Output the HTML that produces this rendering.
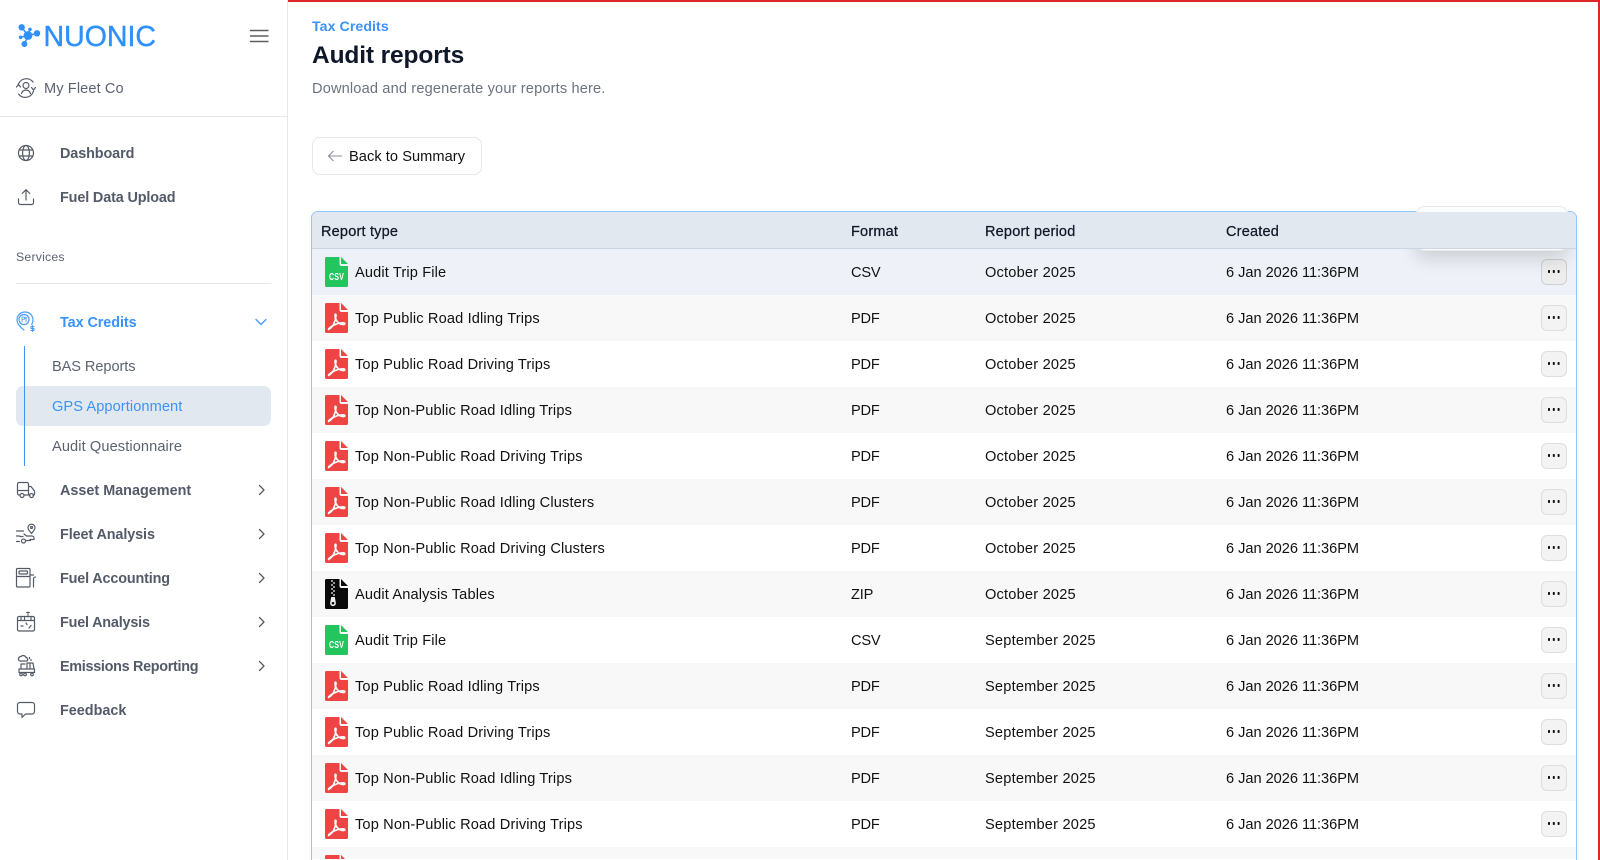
<!DOCTYPE html>
<html lang="en"><head><meta charset="utf-8"><title>Audit reports</title>
<style>
*{box-sizing:border-box}
html,body{margin:0;width:1600px;height:860px;overflow:hidden;background:#fff;font-family:"Liberation Sans",sans-serif}
#page{position:relative;width:1600px;height:860px;overflow:hidden;background:#fff}
.t{position:absolute;white-space:nowrap;line-height:20px;font-size:14.6px;letter-spacing:.2px}
.nav{left:60px;font-weight:700;color:#535a68;font-size:14.4px;letter-spacing:-.1px}
.sub{left:52px;color:#5b6270}
#side{position:absolute;left:0;top:0;width:288px;height:860px;border-right:1px solid #e5e7eb;background:#fff}
#red{position:absolute;left:288px;top:0;width:1312px;height:860px;border-top:2px solid #dc2626;border-right:2px solid #dc2626;z-index:9;pointer-events:none}
#tbl{position:absolute;left:311px;top:211px;width:1266px;height:649px;border:1.5px solid #93c5fd;border-bottom:0;border-radius:7px 7px 0 0;overflow:hidden;background:#fff}
#pop{position:absolute;left:1415px;top:206px;width:154px;height:45px;background:#fbfcfe;border:1px solid #e5e7eb;border-radius:10px;z-index:3;clip-path:inset(-2px -2px 39px -2px)}
#pop2{position:absolute;left:1102.5px;top:-6.5px;width:154px;height:45px;background:#fff;border:1px solid #e5e7eb;border-radius:10px;box-shadow:0 8px 18px rgba(0,0,0,.14);z-index:1}
.h{position:absolute;left:0;top:0;width:100%;height:37px;background:#e2e8f0;border-bottom:1px solid #cbd5e1;z-index:2}
.h span{position:absolute;top:10px;line-height:20px;font-size:14.5px;font-weight:400;letter-spacing:.2px;color:#111827;-webkit-text-stroke:.25px #111827}
.r{position:relative;height:46px;font-size:14.6px;letter-spacing:.2px;color:#111}
.r span{position:absolute;top:14px;line-height:20px;white-space:nowrap}
.a{left:43px;letter-spacing:.14px}.b{left:539px;letter-spacing:-.2px}.c{left:673px}.d{left:914px;letter-spacing:-.03px}
.r svg{position:absolute;left:12.5px;top:8px}
.r i{position:absolute;left:1228.5px;top:10px;width:26px;height:26px;border:1px solid #dedede;border-radius:6px;background:#f3f3f3}
.r i:before{content:"";position:absolute;left:6px;top:10.8px;width:2.4px;height:2.4px;background:#111;border-radius:30%;box-shadow:4.8px 0 #111,9.6px 0 #111}
.r:nth-child(odd){background:#fff}
.r:nth-child(even){background:#f8f8f8}
.r.last{height:12px;overflow:hidden}
#rows{position:absolute;left:0;top:36.5px;width:100%}
#rows .r.first{background:#eef2f8}
#rows .r.first i{background:#eeeded;border-color:#cfcfd2}
.csv{font-family:"Liberation Sans",sans-serif;font-weight:700;font-size:10.5px;fill:#fff}
</style></head><body><div id="page">
<svg width="0" height="0" style="position:absolute"><defs>
<symbol id="pdf" viewBox="0 0 23 30"><path d="M1.5 0H14.5V7a2 2 0 0 0 2 2H23V28.5a1.5 1.5 0 0 1-1.5 1.5H1.5A1.5 1.5 0 0 1 0 28.5V1.5A1.5 1.5 0 0 1 1.5 0Z" fill="#ef4444"/><path d="M16 0L23 7H16Z" fill="#ef4444"/><path d="M4 26C8 24.5 10.500 18 11 13C11.200 10.500 9.800 10.500 10 13C10.500 18 14.500 22 19 21.500C20.500 21.200 20 19.800 18 19.800C13 19.800 7 22.500 4 25.500C3.300 26.500 3.500 27 4 26Z" fill="none" stroke="#fff" stroke-width="1.600"/></symbol>
<symbol id="zip" viewBox="0 0 23 30"><path d="M1.5 0H14.5V7a2 2 0 0 0 2 2H23V28.5a1.5 1.5 0 0 1-1.5 1.5H1.5A1.5 1.5 0 0 1 0 28.5V1.5A1.5 1.5 0 0 1 1.5 0Z" fill="#0a0a0a"/><path d="M16 0L23 7H16Z" fill="#0a0a0a"/><path d="M6 2h2M8 4h2M6 6h2M8 8h2M6 10h2M8 12h2M6 14h2M8 16h2" stroke="#eee" stroke-width="1.2"/><path d="M6.2 18h3.6l1 5.5a2.9 2.9 0 1 1-5.6 0Z" fill="#eee"/><circle cx="8" cy="24.2" r="1.3" fill="#0a0a0a"/></symbol>
</defs></svg>

<div id="side">
<svg width="287" height="860" style="position:absolute;left:0;top:0" fill="none" stroke="#555b66" stroke-width="1.2" stroke-linecap="round" stroke-linejoin="round">
 <!-- logo -->
 <g fill="#2e90fa" stroke="none"><circle cx="21.700" cy="27.300" r="3.200"/><circle cx="37" cy="33.300" r="3.200"/><circle cx="28" cy="35.500" r="4.400"/><circle cx="24.400" cy="44" r="3"/><circle cx="20.600" cy="37.300" r="1.800"/><circle cx="30" cy="29.400" r="1.800"/></g>
 <path d="M21.700 27.300L28 35.500L37 33.300M28 35.500L24.400 44M28 35.500L20.600 37.300M28 35.500L30 29.400" stroke="#2e90fa" stroke-width="1.500"/>
 <text x="43.500" y="46" textLength="112.500" lengthAdjust="spacingAndGlyphs" font-family="Liberation Sans" font-size="29" fill="#2e90fa" stroke="#2e90fa" stroke-width=".4">NUONIC</text>
 <!-- hamburger -->
 <path d="M250.500 30.500H268M250.500 36H268M250.500 41.500H268" stroke="#5b5f66" stroke-width="1.400"/>
 <!-- org -->
 <path d="M18 85.500a8.500 8.500 0 0 1 15-3.500M33.500 91a8.500 8.500 0 0 1-15 3"/><path d="M16.500 87l2-2.500 2 2.500M35.500 87.500l-2 2.500-2-2.500"/><circle cx="26" cy="85.500" r="3"/><path d="M21.500 93.500c.8-2.300 2.500-3.500 4.500-3.500s3.700 1.200 4.500 3.500"/>
 <!-- globe -->
 <circle cx="26" cy="153" r="7.500"/><ellipse cx="26" cy="153" rx="3.400" ry="7.500"/><path d="M19.200 150h13.600M19.200 156h13.600"/>
 <!-- upload -->
 <path d="M26 190v10M22.200 193.500L26 189.700l3.800 3.800M18.500 199v3.500a2 2 0 0 0 2 2h11a2 2 0 0 0 2-2V199"/>
 <!-- tax -->
 <g stroke="#4b9bf9"><path d="M24 330c-4-3-7-6.500-7-10a8 8 0 0 1 16 0c0 1.500-.5 3-1.300 4.300"/><circle cx="24" cy="319.500" r="5"/><path d="M22 322v-5h1.500a1.200 1.200 0 0 1 0 2.500H22M25 317l1 2 1-2M26 319v3" stroke-width=".8"/><path d="M34 326.500h-3v2h3v2h-3M32.500 325.500v6" stroke-width="1"/></g>
 <path d="M256 319.500l5 5 5-5" stroke="#4b9bf9" stroke-width="1.400"/>
 <!-- asset truck -->
 <path d="M20 495h-1a1.500 1.500 0 0 1-1.500-1.500V484a1.500 1.500 0 0 1 1.500-1.500h8a1.500 1.500 0 0 1 1.500 1.500v11M17.500 490.500h11M24 495h6M28.500 486.500h2.500l3.500 4.500v3a1.500 1.500 0 0 1-1.500 1.500"/><circle cx="22" cy="495.500" r="2"/><circle cx="31.500" cy="495.500" r="2"/>
 <!-- fleet -->
 <path d="M16.500 531h7M16.500 536h3M16.500 541.500h3"/><path d="M24 534l2.500 2h5.500a2 2 0 0 1 2 2v1.500h-4M20 536.500h3"/><circle cx="23.500" cy="541" r="2"/><path d="M25.500 540.500h5"/><path d="M31.500 533.500c-2-2.500-3.500-4-3.500-5.800a3.500 3.500 0 0 1 7 0c0 1.800-1.500 3.300-3.500 5.800Z"/><circle cx="31.500" cy="527.500" r="1"/>
 <!-- fuel accounting -->
 <rect x="16.500" y="568.500" width="13.500" height="18.500" rx="1"/><rect x="19" y="571" width="8.500" height="3" rx="1"/><path d="M16.500 576.500h13.500M30 575l3.500 0M33.500 587v-8a2 2 0 0 1 2-2"/>
 <!-- fuel analysis -->
 <rect x="17.500" y="616.500" width="17" height="14.500" rx="1.500"/><path d="M17.500 620.500h17M21 616.500v4M24.500 616.500v4M31 616.500v4M21 626h2M26 623l1 1.500M29 628l2-2.500"/><path d="M28 617v-5M26.500 612.500h3" stroke-width="1"/>
 <!-- emissions -->
 <path d="M19 660.500a2.500 2.500 0 0 1 2-4 3 3 0 0 1 5 1 2 2 0 0 1 1 3.500h-7"/><path d="M29.500 657.500v1M31 659.500v1M19 669h15.500v3.500H19ZM21 669v-5h4M27 669v-6h6l1 6M30 663v6"/><circle cx="21" cy="674.500" r="1.300"/><circle cx="25" cy="674.500" r="1.300"/><circle cx="32" cy="674.500" r="1.300"/>
 <!-- feedback -->
 <path d="M20 702.500h12a2.500 2.500 0 0 1 2.500 2.500v6.500a2.500 2.500 0 0 1-2.500 2.500h-6.500l-3.500 3.500v-3.500h-2a2.500 2.500 0 0 1-2.500-2.500V705a2.500 2.500 0 0 1 2.500-2.500Z"/>
 <!-- chevrons -->
 <path d="M259.500 485.500l4.500 4.500-4.500 4.500M259.500 529.500l4.500 4.500-4.500 4.500M259.500 573.500l4.500 4.500-4.500 4.500M259.500 617.500l4.500 4.500-4.500 4.500M259.500 661.500l4.500 4.500-4.500 4.500" stroke-width="1.300"/>
 <!-- dividers -->
 <path d="M0 116.500H287M16 283.500H271" stroke="#e5e7eb" stroke-width="1"/>
</svg>
<div class="t" style="left:44px;top:79px;color:#5b6270;letter-spacing:.1px">My Fleet Co</div>
<div class="t nav" style="top:144px">Dashboard</div>
<div class="t nav" style="top:188px;letter-spacing:-.13px">Fuel Data Upload</div>
<div class="t" style="left:16px;top:247px;font-size:12.300px;color:#5b6270">Services</div>
<div class="t nav" style="top:313px;color:#3b92f8;letter-spacing:-.07px">Tax Credits</div>
<div class="t sub" style="top:357px;letter-spacing:-.08px">BAS Reports</div>
<div style="position:absolute;left:16px;top:386px;width:255px;height:40px;border-radius:7px;background:#e2e8f0"></div>
<div style="position:absolute;left:24px;top:346px;width:1px;height:120px;background:#3b92f8"></div>
<div class="t sub" style="top:397px;color:#3b92f8;letter-spacing:.08px">GPS Apportionment</div>
<div class="t sub" style="top:437px;letter-spacing:.1px">Audit Questionnaire</div>
<div class="t nav" style="top:481px;letter-spacing:0">Asset Management</div>
<div class="t nav" style="top:525px">Fleet Analysis</div>
<div class="t nav" style="top:569px;letter-spacing:-.15px">Fuel Accounting</div>
<div class="t nav" style="top:613px;letter-spacing:-.19px">Fuel Analysis</div>
<div class="t nav" style="top:657px;letter-spacing:-.3px">Emissions Reporting</div>
<div class="t nav" style="top:701px;letter-spacing:0">Feedback</div>
</div>

<div id="red"></div>
<div class="t" style="left:312px;top:17px;color:#3b92f8;font-weight:700;font-size:14.200px;letter-spacing:.05px">Tax Credits</div>
<div class="t" style="left:312px;top:41px;line-height:30px;font-size:24.500px;font-weight:700;color:#0f172a;letter-spacing:-.13px">Audit reports</div>
<div class="t" style="left:312px;top:79px;color:#6b7280;letter-spacing:.15px">Download and regenerate your reports here.</div>
<div style="position:absolute;left:312px;top:137px;width:170px;height:38px;border:1px solid #e5e7eb;border-radius:8px;background:#fff"></div>
<svg width="16" height="12" style="position:absolute;left:327px;top:150px" fill="none" stroke="#8a8f98" stroke-width="1.100"><path d="M15 6H1.500M6.500 1L1.500 6l5 5"/></svg>
<div class="t" style="left:349px;top:147px;color:#111;letter-spacing:.06px">Back to Summary</div>

<div id="pop"></div>
<div id="tbl">
<div id="pop2"></div>
<div class="h"><span style="left:9px">Report type</span><span style="left:539px">Format</span><span style="left:673px">Report period</span><span style="left:914px">Created</span></div>
<div id="rows">
<div class="r first"><svg width="23" height="30" viewBox="0 0 23 30"><path d="M1.500 0H14.500V7a2 2 0 0 0 2 2H23V28.500a1.500 1.500 0 0 1-1.500 1.500H1.500A1.500 1.500 0 0 1 0 28.500V1.500A1.500 1.500 0 0 1 1.500 0Z" fill="#22c55e"/><path d="M16 0L23 7H16Z" fill="#22c55e"/><text class="csv" x="4" y="23" textLength="15" lengthAdjust="spacingAndGlyphs">CSV</text></svg><span class="a">Audit Trip File</span><span class="b">CSV</span><span class="c">October 2025</span><span class="d">6 Jan 2026 11:36PM</span><i></i></div>
<div class="r"><svg width="23" height="30"><use href="#pdf"/></svg><span class="a">Top Public Road Idling Trips</span><span class="b">PDF</span><span class="c">October 2025</span><span class="d">6 Jan 2026 11:36PM</span><i></i></div>
<div class="r"><svg width="23" height="30"><use href="#pdf"/></svg><span class="a">Top Public Road Driving Trips</span><span class="b">PDF</span><span class="c">October 2025</span><span class="d">6 Jan 2026 11:36PM</span><i></i></div>
<div class="r"><svg width="23" height="30"><use href="#pdf"/></svg><span class="a">Top Non-Public Road Idling Trips</span><span class="b">PDF</span><span class="c">October 2025</span><span class="d">6 Jan 2026 11:36PM</span><i></i></div>
<div class="r"><svg width="23" height="30"><use href="#pdf"/></svg><span class="a">Top Non-Public Road Driving Trips</span><span class="b">PDF</span><span class="c">October 2025</span><span class="d">6 Jan 2026 11:36PM</span><i></i></div>
<div class="r"><svg width="23" height="30"><use href="#pdf"/></svg><span class="a">Top Non-Public Road Idling Clusters</span><span class="b">PDF</span><span class="c">October 2025</span><span class="d">6 Jan 2026 11:36PM</span><i></i></div>
<div class="r"><svg width="23" height="30"><use href="#pdf"/></svg><span class="a">Top Non-Public Road Driving Clusters</span><span class="b">PDF</span><span class="c">October 2025</span><span class="d">6 Jan 2026 11:36PM</span><i></i></div>
<div class="r"><svg width="23" height="30"><use href="#zip"/></svg><span class="a">Audit Analysis Tables</span><span class="b">ZIP</span><span class="c">October 2025</span><span class="d">6 Jan 2026 11:36PM</span><i></i></div>
<div class="r"><svg width="23" height="30" viewBox="0 0 23 30"><path d="M1.500 0H14.500V7a2 2 0 0 0 2 2H23V28.500a1.500 1.500 0 0 1-1.500 1.500H1.500A1.500 1.500 0 0 1 0 28.500V1.500A1.500 1.500 0 0 1 1.500 0Z" fill="#22c55e"/><path d="M16 0L23 7H16Z" fill="#22c55e"/><text class="csv" x="4" y="23" textLength="15" lengthAdjust="spacingAndGlyphs">CSV</text></svg><span class="a">Audit Trip File</span><span class="b">CSV</span><span class="c">September 2025</span><span class="d">6 Jan 2026 11:36PM</span><i></i></div>
<div class="r"><svg width="23" height="30"><use href="#pdf"/></svg><span class="a">Top Public Road Idling Trips</span><span class="b">PDF</span><span class="c">September 2025</span><span class="d">6 Jan 2026 11:36PM</span><i></i></div>
<div class="r"><svg width="23" height="30"><use href="#pdf"/></svg><span class="a">Top Public Road Driving Trips</span><span class="b">PDF</span><span class="c">September 2025</span><span class="d">6 Jan 2026 11:36PM</span><i></i></div>
<div class="r"><svg width="23" height="30"><use href="#pdf"/></svg><span class="a">Top Non-Public Road Idling Trips</span><span class="b">PDF</span><span class="c">September 2025</span><span class="d">6 Jan 2026 11:36PM</span><i></i></div>
<div class="r"><svg width="23" height="30"><use href="#pdf"/></svg><span class="a">Top Non-Public Road Driving Trips</span><span class="b">PDF</span><span class="c">September 2025</span><span class="d">6 Jan 2026 11:36PM</span><i></i></div>
<div class="r last"><svg width="23" height="30"><use href="#pdf"/></svg></div>
</div>
</div>
</div></body></html>
